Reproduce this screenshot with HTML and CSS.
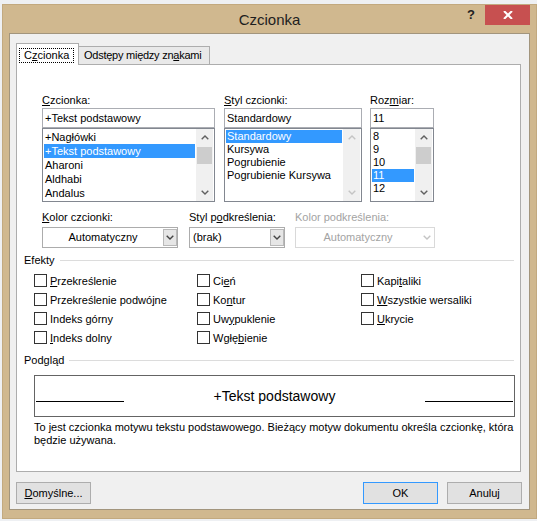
FILE: index.html
```html
<!DOCTYPE html>
<html lang="pl">
  <head>
    <meta charset="UTF-8" />
    <title>Czcionka</title>
    <link rel="stylesheet" href="styles.css">
  </head>

  <body>
    <div class="window">
      <div class="titlebar">
        <div class="title-space"></div>
        <div class="title">Czcionka</div>
        <div class="help">?</div>
        <div class="close">
          <svg width="10" height="8" viewBox="0 0 10 8"><path d="M1 0 9 8M9 0 1 8" stroke="#fff" stroke-width="2" /></svg>
        </div>
      </div>

      <div class="client">
        <div class="tabs">
          <div class="tab active"><span class="focus">C<u>z</u>cionka</span></div>
          <div class="tab">Odstępy między zn<u>a</u>kami</div>
        </div>

        <div class="panel">
          <!-- font / style / size -->
          <div class="font-row">
            <div class="col col-font">
              <div class="label"><u>C</u>zcionka:</div>
              <div class="input">+Tekst podstawowy</div>
              <div class="list">
                <ul class="items tall">
                  <li>+Nagłówki</li>
                  <li class="sel">+Tekst podstawowy</li>
                  <li>Aharoni</li>
                  <li>Aldhabi</li>
                  <li>Andalus</li>
                </ul>
                <div class="scrollbar">
                  <span class="arrow"><svg width="8" height="5" viewBox="0 0 8 5"><path d="M0.7 4.3 4 1 7.3 4.3" fill="none" stroke="#606060" stroke-width="1.4" /></svg></span>
                  <span class="thumb"></span>
                  <span class="arrow down"><svg width="8" height="5" viewBox="0 0 8 5"><path d="M0.7 0.7 4 4 7.3 0.7" fill="none" stroke="#606060" stroke-width="1.4" /></svg></span>
                </div>
              </div>
            </div>

            <div class="col col-style">
              <div class="label"><u>S</u>tyl czcionki:</div>
              <div class="input">Standardowy</div>
              <div class="list">
                <ul class="items">
                  <li class="sel">Standardowy</li>
                  <li>Kursywa</li>
                  <li>Pogrubienie</li>
                  <li>Pogrubienie Kursywa</li>
                </ul>
                <div class="scrollbar off">
                  <span class="arrow"><svg width="8" height="5" viewBox="0 0 8 5"><path d="M0.7 4.3 4 1 7.3 4.3" fill="none" stroke="#c4c4c4" stroke-width="1.4" /></svg></span>
                  <span class="arrow down"><svg width="8" height="5" viewBox="0 0 8 5"><path d="M0.7 0.7 4 4 7.3 0.7" fill="none" stroke="#c4c4c4" stroke-width="1.4" /></svg></span>
                </div>
              </div>
            </div>

            <div class="col col-size">
              <div class="label">Roz<u>m</u>iar:</div>
              <div class="input">11</div>
              <div class="list">
                <ul class="items">
                  <li>8</li>
                  <li>9</li>
                  <li>10</li>
                  <li class="sel">11</li>
                  <li>12</li>
                </ul>
                <div class="scrollbar">
                  <span class="arrow"><svg width="8" height="5" viewBox="0 0 8 5"><path d="M0.7 4.3 4 1 7.3 4.3" fill="none" stroke="#606060" stroke-width="1.4" /></svg></span>
                  <span class="thumb"></span>
                  <span class="arrow down"><svg width="8" height="5" viewBox="0 0 8 5"><path d="M0.7 0.7 4 4 7.3 0.7" fill="none" stroke="#606060" stroke-width="1.4" /></svg></span>
                </div>
              </div>
            </div>
          </div>

          <!-- colour / underline -->
          <div class="combo-row">
            <div class="col col-color">
              <div class="label"><u>K</u>olor czcionki:</div>
              <div class="combo">
                <span class="value center">Automatyczny</span>
                <span class="drop"><svg width="8" height="5" viewBox="0 0 8 5"><path d="M0.7 0.7 4 4 7.3 0.7" fill="none" stroke="#444" stroke-width="1.4" /></svg></span>
              </div>
            </div>
            <div class="col col-under">
              <div class="label">Styl p<u>o</u>dkreślenia:</div>
              <div class="combo">
                <span class="value">(brak)</span>
                <span class="drop"><svg width="8" height="5" viewBox="0 0 8 5"><path d="M0.7 0.7 4 4 7.3 0.7" fill="none" stroke="#444" stroke-width="1.4" /></svg></span>
              </div>
            </div>
            <div class="col col-ucolor disabled">
              <div class="label">Kolor podkreślenia:</div>
              <div class="combo">
                <span class="value center">Automatyczny</span>
                <span class="drop"><svg width="8" height="5" viewBox="0 0 8 5"><path d="M0.7 0.7 4 4 7.3 0.7" fill="none" stroke="#c4c4c4" stroke-width="1.4" /></svg></span>
              </div>
            </div>
          </div>

          <div class="group-head effects-head">Efekty</div>
          <div class="checks">
            <div class="check"><span class="box"></span><span><u>P</u>rzekreślenie</span></div>
            <div class="check"><span class="box"></span><span>Przekreślenie podwó<u>j</u>ne</span></div>
            <div class="check"><span class="box"></span><span>Indeks <u>g</u>órny</span></div>
            <div class="check"><span class="box"></span><span><u>I</u>ndeks dolny</span></div>
            <div class="check"><span class="box"></span><span>Ci<u>e</u>ń</span></div>
            <div class="check"><span class="box"></span><span>Ko<u>n</u>tur</span></div>
            <div class="check"><span class="box"></span><span>Uw<u>y</u>puklenie</span></div>
            <div class="check"><span class="box"></span><span>Wgłę<u>b</u>ienie</span></div>
            <div class="check"><span class="box"></span><span>Kapi<u>t</u>aliki</span></div>
            <div class="check"><span class="box"></span><span><u>W</u>szystkie wersaliki</span></div>
            <div class="check"><span class="box"></span><span><u>U</u>krycie</span></div>
          </div>

          <div class="group-head preview-head">Podgląd</div>
          <div class="preview">
            <span class="rule"></span>
            <span class="sample">+Tekst podstawowy</span>
            <span class="rule"></span>
          </div>
          <p class="note">To jest czcionka motywu tekstu podstawowego. Bieżący motyw dokumentu określa czcionkę, która będzie używana.</p>
        </div>

        <div class="buttons">
          <div class="btn"><u>D</u>omyślne...</div>
          <div class="btn btn-ok">OK</div>
          <div class="btn">Anuluj</div>
        </div>
      </div>
    </div>
  </body>
</html>
```

FILE: styles.css
```css
* {
  box-sizing: border-box;
}

body {
  margin: 0;
  width: 537px;
  height: 521px;
  overflow: hidden;
  background: #eef0f3;
  font-family: "Liberation Sans", Arial, sans-serif;
  font-size: 11px;
  color: #000;
}

u {
  text-underline-offset: 1px;
}

.window {
  margin: 4px 0 0 2px;
  width: 535px;
  height: 515px;
  padding: 0 6px 8px 6px;
  background: #d0b88f;
  border: 1px solid #c2a97f;
}

/* title bar */
.titlebar {
  display: flex;
  height: 28px;
}

.title-space {
  width: 64px;
}

.title {
  flex: 1;
  text-align: center;
  font-size: 15px;
  line-height: 29px;
  color: #1e1e1e;
}

.help {
  width: 10px;
  margin-right: 9px;
  font-size: 13px;
  font-weight: bold;
  line-height: 20px;
  color: #222;
  text-align: center;
}

.close {
  width: 45px;
  height: 20px;
  background: #c75050;
  display: flex;
  align-items: center;
  justify-content: center;
}

/* client area */
.client {
  height: 477px;
  background: #f0f0f0;
  border: 1px solid #a2957d;
}

.tabs {
  position: relative;
  z-index: 1;
  display: flex;
  align-items: flex-end;
  height: 21px;
  margin: 9px 0 0 6px;
}

.tab {
  height: 18px;
  width: 132px;
  margin-left: -1px;
  padding-left: 5px;
  line-height: 17px;
  letter-spacing: -0.25px;
  background: #e9e9e9;
  border: 1px solid #adadad;
  border-bottom: 0;
  white-space: nowrap;
}

.tab.active {
  width: 63px;
  height: 22px;
  margin: 0 0 -1px 0;
  padding: 3px 0 0 2px;
  letter-spacing: 0;
  background: #fff;
}

.focus {
  display: inline-block;
  height: 15px;
  padding: 0 4px;
  line-height: 13px;
  border: 1px dotted #000;
}

.panel {
  width: 505px;
  height: 408px;
  margin-left: 6px;
  padding-top: 28px;
  background: #fff;
  border: 1px solid #adadad;
}

.label {
  height: 15px;
  line-height: 15px;
  white-space: nowrap;
}

/* font, style, size lists */
.font-row {
  display: flex;
  padding-left: 25px;
}

.col-font {
  width: 173px;
}

.col-style {
  width: 138px;
  margin-left: 9px;
}

.col-size {
  width: 64px;
  margin-left: 8px;
}

.input {
  height: 20px;
  padding: 0 2px;
  line-height: 18px;
  border: 1px solid #abadb3;
  white-space: nowrap;
}

.list {
  display: flex;
  height: 74px;
  border: 1px solid #828790;
}

.items {
  flex: 1;
  margin: 0;
  padding: 1px;
  list-style: none;
  overflow: hidden;
}

.items li {
  height: 13px;
  padding-left: 1px;
  line-height: 13px;
  white-space: nowrap;
}

.items.tall li {
  height: 14px;
  line-height: 14px;
}

.items li.sel {
  background: #3399ff;
  color: #fff;
}

.scrollbar {
  display: flex;
  flex-direction: column;
  width: 17px;
  margin-right: 1px;
  background: #f0f0f0;
}

.scrollbar .arrow {
  display: flex;
  align-items: center;
  justify-content: center;
  height: 17px;
}

.scrollbar .arrow.down {
  margin-top: auto;
}

.scrollbar .thumb {
  height: 17px;
  margin: 1px 1px 0 1px;
  background: #cdcdcd;
}

/* colour and underline combos */
.combo-row {
  display: flex;
  margin-top: 8px;
  padding-left: 25px;
}

.combo-row .label {
  margin-bottom: 2px;
}

.col-color {
  width: 136px;
}

.col-under {
  width: 96px;
  margin-left: 11px;
}

.col-ucolor {
  width: 140px;
  margin-left: 10px;
}

.combo {
  display: flex;
  height: 21px;
  background: #fff;
  border: 1px solid #acacac;
}

.combo .value {
  flex: 1;
  padding-left: 3px;
  line-height: 19px;
  white-space: nowrap;
}

.combo .value.center {
  padding-left: 0;
  text-align: center;
}

.combo .drop {
  display: flex;
  align-items: center;
  justify-content: center;
  width: 14px;
  margin: 1px 0;
  background: #e6e6e6;
  border: 1px solid #b9b9b9;
}

.disabled {
  color: #a3a3a3;
}

.disabled .combo {
  border-color: #d9d9d9;
}

.disabled .combo .drop {
  background: transparent;
  border-color: transparent;
}

/* groups */
.group-head {
  display: flex;
  align-items: center;
  height: 15px;
  padding: 0 6px 0 7px;
  line-height: 15px;
}

.group-head::after {
  content: "";
  flex: 1;
  height: 1px;
  margin-left: 5px;
  background: #dcdcdc;
}

.effects-head {
  margin-top: 5px;
}

.checks {
  display: grid;
  grid-template-columns: 163px 164px 1fr;
  grid-template-rows: repeat(4, 19px);
  grid-auto-flow: column;
  margin-top: 3px;
  padding-left: 17px;
}

.check {
  display: flex;
  align-items: center;
  gap: 3px;
  white-space: nowrap;
}

.box {
  width: 13px;
  height: 13px;
  background: #fff;
  border: 1px solid #333;
}

.preview-head {
  margin-top: 6px;
}

.preview {
  display: flex;
  align-items: center;
  width: 481px;
  height: 42px;
  margin: 7px 0 0 17px;
  padding: 0 1px;
  border: 1px solid #646464;
}

.rule {
  width: 88px;
  height: 1px;
  margin-top: 10px;
  background: #000;
}

.sample {
  flex: 1;
  text-align: center;
  font-size: 14px;
}

.note {
  width: 486px;
  margin: 4px 0 0 17px;
  line-height: 13px;
}

/* bottom buttons */
.buttons {
  display: flex;
  margin-top: 10px;
  padding: 0 7px 0 6px;
}

.btn {
  width: 75px;
  height: 22px;
  line-height: 20px;
  text-align: center;
  background: #e1e1e1;
  border: 1px solid #adadad;
}

.btn-ok {
  margin-left: auto;
  margin-right: 9px;
  border-color: #3399ff;
}
```
